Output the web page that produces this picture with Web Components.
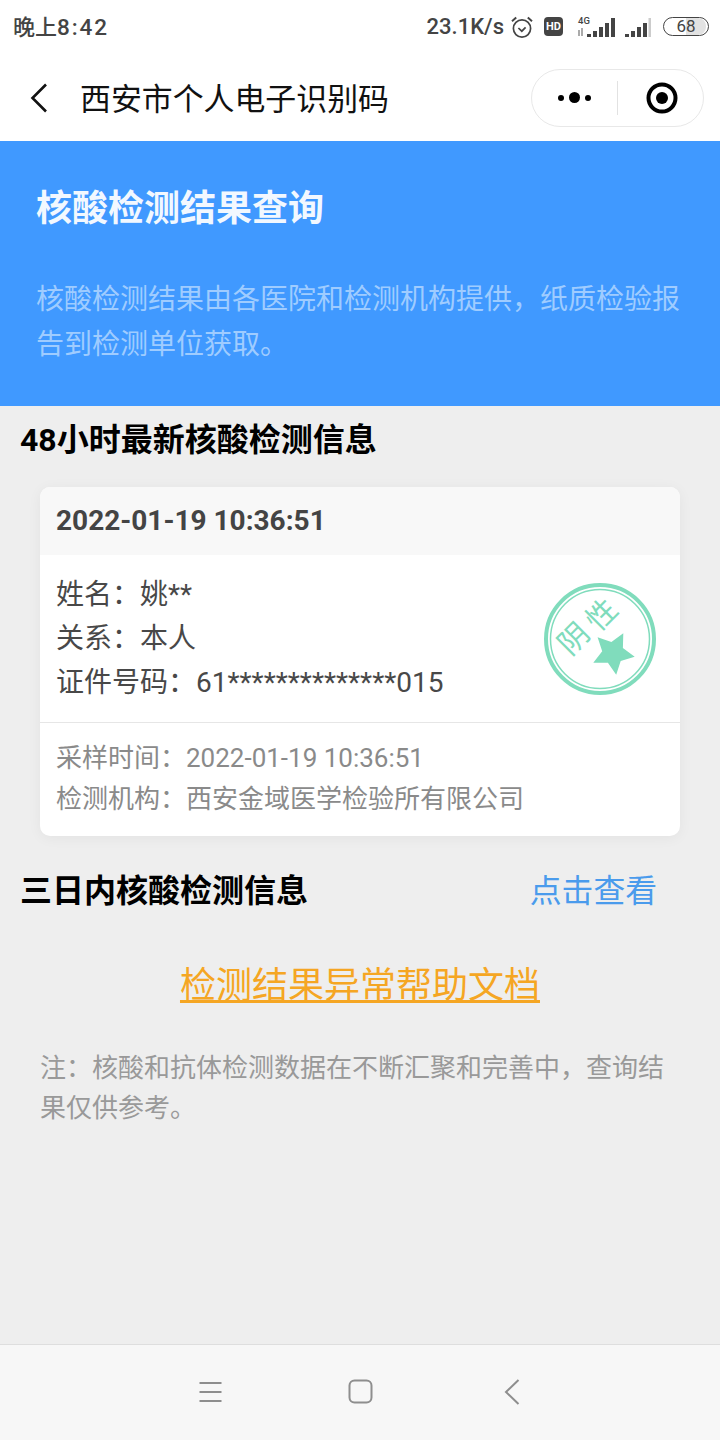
<!DOCTYPE html>
<html lang="zh-CN">
<head>
<meta charset="utf-8">
<title>核酸检测结果查询</title>
<style>
  html, body { margin: 0; padding: 0; }
  body {
    width: 720px; height: 1440px; overflow: hidden;
    display: flex; flex-direction: column;
    background: #eeeeee;
    font-family: Roboto, "Noto Sans CJK SC", sans-serif;
  }
  main-page { flex: 1; }
</style>
</head>
<body>
<status-bar></status-bar>
<nav-bar>西安市个人电子识别码</nav-bar>
<main-page>
  <hero-banner heading="核酸检测结果查询">核酸检测结果由各医院和检测机构提供，纸质检验报告到检测单位获取。</hero-banner>
  <section-title>48小时最新核酸检测信息</section-title>
  <result-card stamp-date="2022-01-19 10:36:51" name="姚**" relation="本人" idno="61**************015"
    sampled="2022-01-19 10:36:51" org="西安金域医学检验所有限公司"></result-card>
  <section-title class="three" action="点击查看">三日内核酸检测信息</section-title>
  <help-link>检测结果异常帮助文档</help-link>
  <foot-note>注：核酸和抗体检测数据在不断汇聚和完善中，查询结果仅供参考。</foot-note>
</main-page>
<soft-keys></soft-keys>

<script>
class StatusBar extends HTMLElement {
  constructor() {
    super();
    this.attachShadow({ mode: 'open' }).innerHTML = `
      <style>
        :host { display: flex; align-items: center; justify-content: space-between; height: 56px; padding: 0 11px 6px 13px; box-sizing: border-box; background: #fff; color: #444; font-size: 22px; font-weight: 500; }
        .right { display: flex; align-items: center; }
        .time b { font-weight: 500; font-size: 22.5px; letter-spacing: 1.9px; }
        .speed { margin-top: 3px; }
        svg { display: block; margin-top: 3px; }
        .clock { margin-left: 6px; }
        .hd { margin-left: 10px; }
        .sig1 { margin-left: 14px; }
        .sig2 { margin-left: 9px; }
        .batt { margin: 3px 0 0 12px; position: relative; width: 46px; height: 19px; box-sizing: border-box; border: 1.5px solid #444; border-radius: 10px; overflow: hidden; font-size: 17px; line-height: 16px; text-align: center; font-weight: 400; }
        .batt i { position: absolute; left: 50%; top: 0; bottom: 0; right: 2px; background: #e2e2e2; border-radius: 0 8px 8px 0; }
        .batt span { position: relative; }
      </style>
      <span class="time">晚上<b>8:42</b></span>
      <div class="right">
        <span class="speed">23.1K/s</span>
        <svg class="clock" width="24" height="24" viewBox="0 0 24 24" fill="none" stroke="#444">
          <circle cx="12" cy="13.5" r="8.6" stroke-width="1.7"/>
          <path d="M8.4 13l3.4 3.2 3.8-3.8" stroke-width="1.7"/>
          <path d="M2 6.2l4.2-3.6M22 6.2l-4.2-3.6" stroke-width="2"/>
        </svg>
        <svg class="hd" width="19" height="19" viewBox="0 0 19 19">
          <rect width="19" height="19" rx="4" fill="#444"/>
          <text x="9.5" y="13.4" text-anchor="middle" font-family="Roboto, sans-serif" font-size="11" font-weight="700" fill="#fff">HD</text>
        </svg>
        <svg class="sig1" width="38" height="24" viewBox="0 0 38 24">
          <text x="1" y="8.500" font-family="Roboto, sans-serif" font-size="9.500" font-weight="500" fill="#444">4G</text>
          <path d="M2 15v6M5 13v8" stroke="#888" stroke-width="1.400"/>
          <g fill="#444"><rect x="10" y="19" width="4" height="3"/><rect x="16" y="16" width="4" height="6"/><rect x="22" y="12" width="4" height="10"/><rect x="28" y="8" width="4" height="14"/><rect x="34" y="3" width="4" height="19"/></g>
        </svg>
        <svg class="sig2" width="27" height="24" viewBox="0 0 27 24">
          <g fill="#444"><rect x="1" y="19" width="4" height="3"/><rect x="7" y="16" width="4" height="6"/><rect x="13" y="12" width="4" height="10"/><rect x="19" y="8" width="4" height="14"/></g>
          <rect x="24.500" y="3" width="2.500" height="19" fill="#ccc"/>
        </svg>
        <div class="batt"><i></i><span>68</span></div>
      </div>`;
  }
}
customElements.define('status-bar', StatusBar);

class NavBar extends HTMLElement {
  constructor() {
    super();
    this.attachShadow({ mode: 'open' }).innerHTML = `
      <style>
        :host { display: flex; align-items: center; height: 85px; padding: 0 16px 2px 30px; box-sizing: border-box; background: #fff; color: #111; font-size: 30.9px; }
        .back { margin-right: 32px; flex: none; }
        .title { flex: 1; margin-bottom: 2px; }
        .capsule { width: 173px; height: 58px; box-sizing: border-box; border: 1px solid #e8e8e8; border-radius: 29px; display: flex; align-items: center; }
        .more { width: 85px; display: flex; justify-content: center; align-items: center; gap: 5px; }
        .more i { display: block; background: #000; border-radius: 50%; width: 6px; height: 6px; }
        .more i.big { width: 11px; height: 11px; }
        .sep { width: 1px; height: 34px; background: #e2e2e2; }
        .close { flex: 1; display: flex; justify-content: center; padding-left: 3px; }
      </style>
      <svg class="back" width="18" height="30" viewBox="0 0 18 30" fill="none" stroke="#111" stroke-width="2.6"><path d="M16 1.5L2.5 15 16 28.5"/></svg>
      <span class="title"><slot></slot></span>
      <div class="capsule">
        <div class="more"><i></i><i class="big"></i><i></i></div>
        <div class="sep"></div>
        <div class="close">
          <svg width="32" height="32" viewBox="0 0 32 32"><circle cx="16" cy="16" r="13.5" fill="none" stroke="#000" stroke-width="4"/><circle cx="16" cy="16" r="6" fill="#000"/></svg>
        </div>
      </div>`;
  }
}
customElements.define('nav-bar', NavBar);

class HeroBanner extends HTMLElement {
  constructor() {
    super();
    this.attachShadow({ mode: 'open' }).innerHTML = `
      <style>
        :host { display: block; height: 265px; padding: 41px 36px 0; box-sizing: border-box; background: #4099ff; }
        h1 { margin: 0 0 41px; font-size: 36px; line-height: 54px; font-weight: 700; color: #f2f8ff; }
        p { margin: 0; font-size: 28px; line-height: 45px; color: #9fccff; }
      </style>
      <h1>${this.getAttribute('heading')}</h1>
      <p><slot></slot></p>`;
  }
}
customElements.define('hero-banner', HeroBanner);

class SectionTitle extends HTMLElement {
  constructor() {
    super();
    const action = this.getAttribute('action');
    this.attachShadow({ mode: 'open' }).innerHTML = `
      <style>
        :host { display: flex; justify-content: space-between; align-items: center; height: 66px; padding: 0 63px 4px 20px; box-sizing: border-box; font-size: 32px; font-weight: 700; color: #000; }
        :host(.three) { margin-top: 18px; height: 68px; padding: 0 63px 0 20px; }
        a { font-size: 31.8px; font-weight: 400; color: #4a9bec; }
      </style>
      <span><slot></slot></span>
      ${action ? `<a>${action}</a>` : ''}`;
  }
}
customElements.define('section-title', SectionTitle);

class SealStamp extends HTMLElement {
  constructor() {
    super();
    this.attachShadow({ mode: 'open' }).innerHTML = `
      <style>
        :host { display: block; width: 112px; height: 112px; }
        svg { display: block; }
        text { font-family: "Noto Sans CJK SC", sans-serif; font-size: 30px; fill: #80dcbc; text-anchor: middle; dominant-baseline: central; }
      </style>
      <svg width="112" height="112" viewBox="0 0 112 112">
        <circle cx="56" cy="56" r="54" fill="none" stroke="#80dcbc" stroke-width="4"/>
        <circle cx="56" cy="56" r="49.5" fill="none" stroke="#80dcbc" stroke-width="1.500"/>
        <text transform="translate(28 54) rotate(-45)">阴</text>
        <text transform="translate(56 30) rotate(-45)">性</text>
        <path d="M79.300 50.300L78.900 65.100 90.700 73.700 76.700 77.900 72.200 91.800 63.900 79.700 49.300 79.800 58.200 68.200 53.600 54.300 67.400 59.100z" fill="#80dcbc"/>
      </svg>`;
  }
}
customElements.define('seal-stamp', SealStamp);

class ResultCard extends HTMLElement {
  constructor() {
    super();
    const a = n => this.getAttribute(n);
    this.attachShadow({ mode: 'open' }).innerHTML = `
      <style>
        :host { display: block; margin: 15px 40px 0; background: #fff; border-radius: 10px; overflow: hidden; box-shadow: 0 2px 14px rgba(0,0,0,.05); }
        .head { height: 68px; padding: 0 16px 2px; box-sizing: border-box; display: flex; align-items: center; background: #f8f8f8; font-size: 28px; font-weight: 700; color: #444; }
        .body { height: 168px; padding: 18px 24px 0 16px; box-sizing: border-box; display: flex; justify-content: space-between; border-bottom: 1px solid #e6e6e6; font-size: 28px; line-height: 44px; color: #484848; }
        seal-stamp { margin-top: 10px; }
        .meta { height: 113px; padding: 15px 16px 0; box-sizing: border-box; font-size: 26px; line-height: 41px; color: #8a8a8a; }
      </style>
      <div class="head">${a('stamp-date')}</div>
      <div class="body">
        <div>
          <div>姓名：${a('name')}</div>
          <div>关系：${a('relation')}</div>
          <div>证件号码：${a('idno')}</div>
        </div>
        <seal-stamp></seal-stamp>
      </div>
      <div class="meta">
        <div>采样时间：${a('sampled')}</div>
        <div>检测机构：${a('org')}</div>
      </div>`;
  }
}
customElements.define('result-card', ResultCard);

class HelpLink extends HTMLElement {
  constructor() {
    super();
    this.attachShadow({ mode: 'open' }).innerHTML = `
      <style>
        :host { display: block; margin-top: 37px; text-align: center; font-size: 36px; line-height: 54px; color: #f5a623; }
        u { text-underline-offset: 2px; text-decoration-thickness: 3px; }
      </style>
      <u><slot></slot></u>`;
  }
}
customElements.define('help-link', HelpLink);

class FootNote extends HTMLElement {
  constructor() {
    super();
    this.attachShadow({ mode: 'open' }).innerHTML = `
      <style>
        :host { display: block; margin-top: 35px; padding: 0 40px; font-size: 26px; line-height: 40px; color: #999; }
      </style>
      <slot></slot>`;
  }
}
customElements.define('foot-note', FootNote);

class SoftKeys extends HTMLElement {
  constructor() {
    super();
    this.attachShadow({ mode: 'open' }).innerHTML = `
      <style>
        :host { display: flex; align-items: center; height: 96px; padding-bottom: 2px; box-sizing: border-box; border-top: 1px solid #dedede; background: #f7f7f7; }
        svg { display: block; }
        .menu { margin-left: 199px; }
        .home { margin-left: 125px; }
        .back { margin-left: 130px; }
      </style>
      <svg class="menu" width="24" height="22" viewBox="0 0 24 22" stroke="#8e8e8e" stroke-width="2"><path d="M.500 2h22M.500 11h22M.500 20h22"/></svg>
      <svg class="home" width="26" height="26" viewBox="0 0 26 26"><rect x="1.500" y="1.500" width="22" height="22" rx="5" fill="none" stroke="#8e8e8e" stroke-width="2"/></svg>
      <svg class="back" width="16" height="26" viewBox="0 0 16 26"><path d="M14.500 1L2 13l12.500 12" fill="none" stroke="#8e8e8e" stroke-width="2"/></svg>`;
  }
}
customElements.define('soft-keys', SoftKeys);
</script>
</body>
</html>
